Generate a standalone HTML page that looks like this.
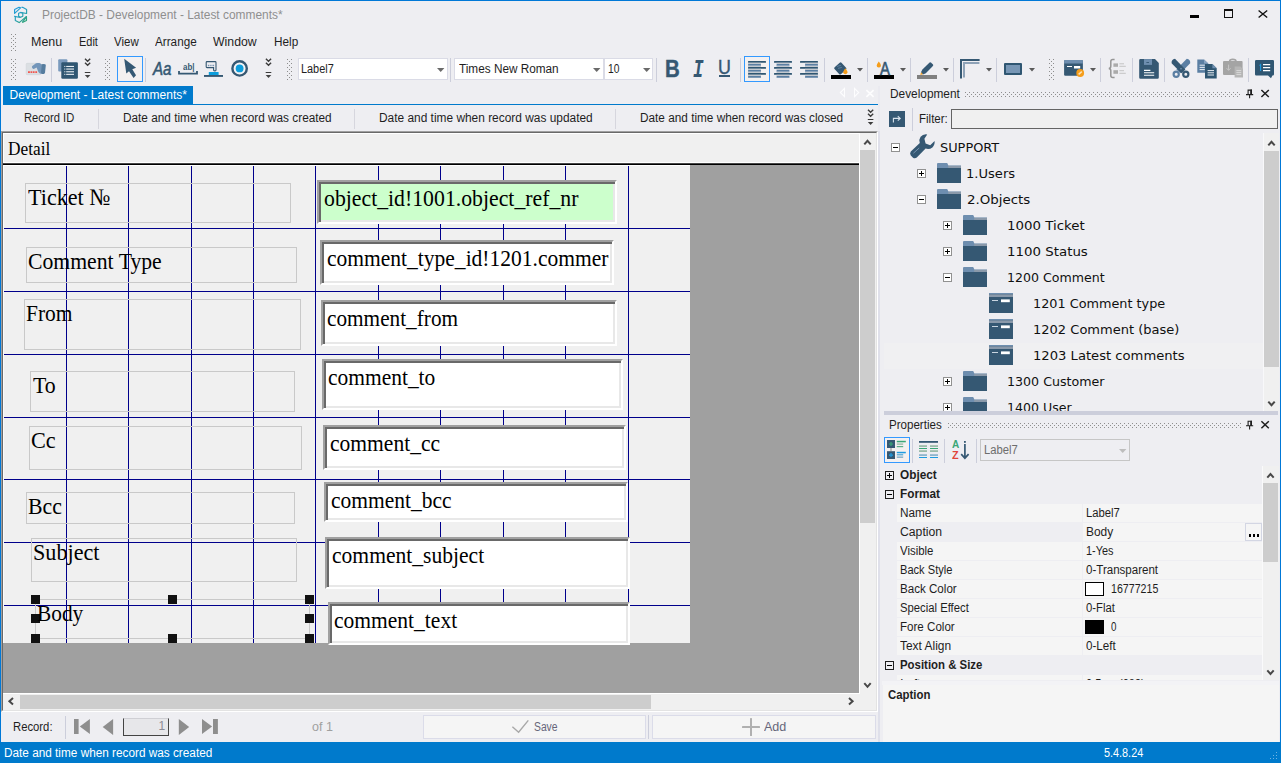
<!DOCTYPE html>
<html lang="en"><head><meta charset="utf-8"><title>ProjectDB - Development - Latest comments*</title>
<style>
html,body{margin:0;padding:0;}
body{width:1281px;height:763px;overflow:hidden;background:#EEEEF2;position:relative;font-family:"Liberation Sans", sans-serif;}
div,svg,span.t{position:absolute;box-sizing:border-box;}
svg{overflow:visible;}
.grp{left:0;top:0;width:0;height:0;}
span.t{white-space:pre;transform-origin:0 0;display:block;}
</style></head><body>
<div class="grp" id="window-frame"><div style="left:0px;top:0px;width:1281px;height:1px;background:#0078D7;"></div><div style="left:0px;top:0px;width:1px;height:763px;background:#0078D7;"></div><div style="left:1280px;top:0px;width:1px;height:763px;background:#0078D7;"></div><svg style="left:0;top:0" width="1281" height="763" viewBox="0 0 1281 763"><defs><linearGradient id="lg" gradientUnits="userSpaceOnUse" x1="14" y1="7" x2="27" y2="23"><stop offset="0" stop-color="#1E9BE8"/><stop offset=".55" stop-color="#27A0B4"/><stop offset="1" stop-color="#2FA365"/></linearGradient></defs>
<g fill="none" stroke="url(#lg)" stroke-width="1.15" stroke-linejoin="round">
<path d="M14.6 13.4V9.6L19 7.3L20.6 7.9L14.6 13.4Z"/>
<path d="M21.5 7.4L22.6 7.3L26.6 9.5V13.5L20.4 12.4"/>
<path d="M18.6 13.3L20.7 12.5L22.8 13.3V16.3L20.7 17.3L18.6 16.4Z"/>
<path d="M14.4 16.3L15.3 16.5V20.6L19.2 22.6L26.5 16.5V20.4L22.3 22.4"/>
<path d="M14.4 16.4L20.4 17.5"/>
<path d="M26.5 16.6L22.4 22.3"/>
</g></svg><span class="t" style='left:42.00px;top:8.00px;font:12px "Liberation Sans", sans-serif;line-height:14.00px;color:#8F8F8F;transform:scaleX(0.9941);'>ProjectDB - Development - Latest comments*</span><div style="left:1190px;top:15px;width:9px;height:3px;background:#000;"></div><div style="left:1224px;top:9px;width:9px;height:9px;border:1px solid #111;border-top:2.6px solid #111;"></div><svg style="left:0;top:0" width="1281" height="763" viewBox="0 0 1281 763"><path d="M1258.6 10.4L1267.2 17.6M1267.2 10.4L1258.6 17.6" stroke="#111" stroke-width="1.35" fill="none"/></svg></div><div class="grp" id="menubar"><div style="left:11px;top:34px;width:5px;height:17px;background:radial-gradient(circle at .5px .5px,#8E8E8E .6px,transparent .8px) 0 0/4px 4px,radial-gradient(circle at .5px .5px,#8E8E8E .6px,transparent .8px) 2px 2px/4px 4px;"></div><span class="t" style='left:31.00px;top:35.00px;font:12px "Liberation Sans", sans-serif;line-height:14.00px;color:#1E1E1E;transform:scaleX(1.0394);'>Menu</span><span class="t" style='left:78.50px;top:35.00px;font:12px "Liberation Sans", sans-serif;line-height:14.00px;color:#1E1E1E;transform:scaleX(0.9136);'>Edit</span><span class="t" style='left:114.00px;top:35.00px;font:12px "Liberation Sans", sans-serif;line-height:14.00px;color:#1E1E1E;transform:scaleX(0.9569);'>View</span><span class="t" style='left:155.00px;top:35.00px;font:12px "Liberation Sans", sans-serif;line-height:14.00px;color:#1E1E1E;transform:scaleX(0.9763);'>Arrange</span><span class="t" style='left:213.00px;top:35.00px;font:12px "Liberation Sans", sans-serif;line-height:14.00px;color:#1E1E1E;transform:scaleX(1.0229);'>Window</span><span class="t" style='left:273.50px;top:35.00px;font:12px "Liberation Sans", sans-serif;line-height:14.00px;color:#1E1E1E;transform:scaleX(0.9798);'>Help</span></div><div class="grp" id="toolbar"><div style="left:11px;top:59px;width:5px;height:21px;background:radial-gradient(circle at .5px .5px,#8E8E8E .6px,transparent .8px) 0 0/4px 4px,radial-gradient(circle at .5px .5px,#8E8E8E .6px,transparent .8px) 2px 2px/4px 4px;"></div><svg style="left:0;top:0" width="1281" height="763" viewBox="0 0 1281 763"><rect x="26.2" y="63.3" width="14.6" height="11.4" rx=".8" fill="#DBDFE3" stroke="#CDD1D5" stroke-width=".5"/>
<path d="M28 71.3h1.9v1.6h-1.9zM30.5 71.3h1.9v1.6h-1.9zM33 71.3h1.6v1.6h-1.6zM35.3 71.3h1.8v1.6h-1.8z" fill="#F2554E"/>
<path d="M32 67.6Q31.6 66.4 32.6 65.8L36 63.3Q36.8 62.9 37.6 62.9L39.2 63Q40 63.1 40.6 63.7L41.6 64.6V73.9L40 73.6Q38.8 73 38.3 71.8L36.6 67.4L33.8 69Q32.6 69.2 32 67.6Z" fill="#7396BA"/>
<path d="M41.4 64.3Q43.6 63.6 45.2 64.3Q45.9 64.8 45.8 65.6L45 72.8Q44.8 73.8 43.8 74L42 74Q41 73.8 41 72.8Z" fill="#567D9F"/></svg><div style="left:51px;top:58px;width:1px;height:24px;background:#CCCEDB;"></div><svg style="left:0;top:0" width="1281" height="763" viewBox="0 0 1281 763"><rect x="58.2" y="59.3" width="9.2" height="12.2" rx="1" fill="#7A9ABD"/>
<rect x="61.3" y="62.2" width="16.6" height="16.6" rx="1.2" fill="#2F5672"/>
<g fill="#E8EEF3"><rect x="66.2" y="65.9" width="7.8" height="1.1"/><rect x="66.2" y="68.5" width="7.8" height="1.1"/><rect x="66.2" y="71.2" width="7.8" height="1.1"/><rect x="66.2" y="73.8" width="7.8" height="1.1"/>
<rect x="64.3" y="65.9" width="1" height="1.1"/><rect x="64.3" y="68.5" width="1" height="1.1"/><rect x="64.3" y="71.2" width="1" height="1.1"/><rect x="64.3" y="73.8" width="1" height="1.1"/></g></svg><svg style="left:0;top:0" width="1281" height="763" viewBox="0 0 1281 763"><g fill="none" stroke="#3A3A3A" stroke-width="1.35"><path d="M85 58.7l2.6 2.6l2.6-2.6M85 62.7l2.6 2.6l2.6-2.6"/><path d="M84.8 72.5h5.6" stroke-width="1"/></g><path d="M84.8 75h5.6l-2.8 2.9z" fill="#444"/></svg><div style="left:105px;top:59px;width:5px;height:21px;background:radial-gradient(circle at .5px .5px,#8E8E8E .6px,transparent .8px) 0 0/4px 4px,radial-gradient(circle at .5px .5px,#8E8E8E .6px,transparent .8px) 2px 2px/4px 4px;"></div><div style="left:117px;top:56px;width:26px;height:26px;border:1px solid #3399FF;background:#F3F0F0;"></div><svg style="left:0;top:0" width="1281" height="763" viewBox="0 0 1281 763"><path d="M124.2 58.8L136.1 67.8L132.3 69.2L136 75.2L133.6 78.1L129 71.3L126.3 73.4Z" fill="#355873"/></svg><div style="left:145px;top:58px;width:1px;height:24px;background:#CCCEDB;"></div><span class="t" style='left:153.06px;top:59.40px;font:italic 17.6px "Liberation Sans", sans-serif;line-height:20.00px;color:#355873;transform:scaleX(0.8577);-webkit-text-stroke:.55px #355873;'>Aa</span><span class="t" style='left:183.00px;top:61.40px;font:bold 9.4px "Liberation Sans", sans-serif;line-height:11.00px;color:#355873;transform:scaleX(0.8500);'>ab|</span><svg style="left:0;top:0" width="1281" height="763" viewBox="0 0 1281 763"><path d="M179 71v2.6h18v-2.6" fill="none" stroke="#355873" stroke-width="1.8"/></svg><svg style="left:0;top:0" width="1281" height="763" viewBox="0 0 1281 763"><rect x="204" y="75" width="19" height="1.9" fill="#355873"/><rect x="208.8" y="72" width="9.8" height="3" fill="#0C9DDC"/>
<path d="M207 61.6h8.2q.8 0 .8.8v7.6q0 .9-.9.9h-.6q-.9 0-.9-.9v-2.4h-6.6q-.8 0-.8-.8v-4.4q0-.8.8-.8z" fill="none" stroke="#355873" stroke-width="1.1"/>
<path d="M208.4 66.2v-1.4M210.2 66.2v-1.4M212 66.2v-1.4M213.6 66.2v-1.4" stroke="#5B7FA3" stroke-width=".9"/></svg><svg style="left:0;top:0" width="1281" height="763" viewBox="0 0 1281 763"><circle cx="239.6" cy="68.4" r="7.2" fill="#F4F4F6" stroke="#355873" stroke-width="2.4"/><circle cx="239.6" cy="68.4" r="3.9" fill="#0C9DDC"/></svg><svg style="left:0;top:0" width="1281" height="763" viewBox="0 0 1281 763"><g fill="none" stroke="#3A3A3A" stroke-width="1.35"><path d="M265.9 58.7l2.6 2.6l2.6-2.6M265.9 62.7l2.6 2.6l2.6-2.6"/><path d="M265.7 72.5h5.6" stroke-width="1"/></g><path d="M265.7 75h5.6l-2.8 2.9z" fill="#444"/></svg><div style="left:287px;top:59px;width:5px;height:21px;background:radial-gradient(circle at .5px .5px,#8E8E8E .6px,transparent .8px) 0 0/4px 4px,radial-gradient(circle at .5px .5px,#8E8E8E .6px,transparent .8px) 2px 2px/4px 4px;"></div><div style="left:298px;top:58px;width:150px;height:22px;background:#fff;border:1px solid #DADBE6;"></div><span class="t" style='left:301.00px;top:62.00px;font:12px "Liberation Sans", sans-serif;line-height:14.00px;color:#1E1E1E;transform:scaleX(0.9076);'>Label7</span><svg style="left:437px;top:67.5px;" width="8" height="5" viewBox="0 0 8 5"><path d="M0 0H7.4L3.7 4Z" fill="#6A6A6A"/></svg><div style="left:450px;top:58px;width:1px;height:24px;background:#CCCEDB;"></div><div style="left:454px;top:58px;width:150px;height:22px;background:#fff;border:1px solid #DADBE6;"></div><span class="t" style='left:458.50px;top:62.00px;font:12px "Liberation Sans", sans-serif;line-height:14.00px;color:#1E1E1E;transform:scaleX(0.9811);'>Times New Roman</span><svg style="left:593px;top:67.5px;" width="8" height="5" viewBox="0 0 8 5"><path d="M0 0H7.4L3.7 4Z" fill="#6A6A6A"/></svg><div style="left:604px;top:58px;width:49px;height:22px;background:#fff;border:1px solid #DADBE6;"></div><span class="t" style='left:608.30px;top:62.00px;font:12px "Liberation Sans", sans-serif;line-height:14.00px;color:#1E1E1E;transform:scaleX(0.8556);'>10</span><svg style="left:642.8px;top:67.5px;" width="8" height="5" viewBox="0 0 8 5"><path d="M0 0H7.4L3.7 4Z" fill="#6A6A6A"/></svg><div style="left:656px;top:58px;width:1px;height:24px;background:#CCCEDB;"></div><span class="t" style='left:665.13px;top:56.00px;font:bold 23.5px "Liberation Sans", sans-serif;line-height:26.00px;color:#355873;transform:scaleX(0.8667);-webkit-text-stroke:.45px #355873;'>B</span><span class="t" style='left:693.10px;top:56.00px;font:italic bold 25.5px "Liberation Mono", monospace;line-height:29.00px;color:#355873;transform:scaleX(0.6875);'>I</span><span class="t" style='left:718.21px;top:56.40px;font:20px "Liberation Sans", sans-serif;line-height:22.00px;color:#355873;transform:scaleX(0.8917);-webkit-text-stroke:.4px #355873;'>U</span><div style="left:719px;top:75.4px;width:11px;height:1.7px;background:#355873;"></div><div style="left:740px;top:58px;width:1px;height:24px;background:#CCCEDB;"></div><div style="left:744px;top:56px;width:26px;height:26px;border:1px solid #3399FF;background:#F3F0F0;"></div><svg style="left:0;top:0" width="1281" height="763" viewBox="0 0 1281 763"><rect x="748" y="61" width="18" height="1.8" rx=".6" fill="#2F5672"/><rect x="748" y="62.8" width="13" height="1.2" fill="#C3C8CF"/><rect x="748" y="64" width="13" height="1.8" rx=".6" fill="#5B7FA3"/><rect x="748" y="65.8" width="13" height="1.2" fill="#C3C8CF"/><rect x="748" y="67" width="18" height="1.8" rx=".6" fill="#2F5672"/><rect x="748" y="68.8" width="13" height="1.2" fill="#C3C8CF"/><rect x="748" y="70" width="13" height="1.8" rx=".6" fill="#5B7FA3"/><rect x="748" y="71.8" width="13" height="1.2" fill="#C3C8CF"/><rect x="748" y="73" width="18" height="1.8" rx=".6" fill="#2F5672"/><rect x="748" y="74.8" width="13" height="1.2" fill="#C3C8CF"/><rect x="748" y="76" width="13" height="1.8" rx=".6" fill="#5B7FA3"/></svg><svg style="left:0;top:0" width="1281" height="763" viewBox="0 0 1281 763"><rect x="774" y="61" width="18" height="1.8" rx=".6" fill="#2F5672"/><rect x="776.5" y="62.8" width="13" height="1.2" fill="#C3C8CF"/><rect x="776.5" y="64" width="13.0" height="1.8" rx=".6" fill="#5B7FA3"/><rect x="776.5" y="65.8" width="13" height="1.2" fill="#C3C8CF"/><rect x="774" y="67" width="18" height="1.8" rx=".6" fill="#2F5672"/><rect x="776.5" y="68.8" width="13" height="1.2" fill="#C3C8CF"/><rect x="776.5" y="70" width="13.0" height="1.8" rx=".6" fill="#5B7FA3"/><rect x="776.5" y="71.8" width="13" height="1.2" fill="#C3C8CF"/><rect x="774" y="73" width="18" height="1.8" rx=".6" fill="#2F5672"/><rect x="776.5" y="74.8" width="13" height="1.2" fill="#C3C8CF"/><rect x="776.5" y="76" width="13.0" height="1.8" rx=".6" fill="#5B7FA3"/></svg><svg style="left:0;top:0" width="1281" height="763" viewBox="0 0 1281 763"><rect x="800" y="61" width="18" height="1.8" rx=".6" fill="#2F5672"/><rect x="805" y="62.8" width="13" height="1.2" fill="#C3C8CF"/><rect x="805" y="64" width="13" height="1.8" rx=".6" fill="#5B7FA3"/><rect x="805" y="65.8" width="13" height="1.2" fill="#C3C8CF"/><rect x="800" y="67" width="18" height="1.8" rx=".6" fill="#2F5672"/><rect x="805" y="68.8" width="13" height="1.2" fill="#C3C8CF"/><rect x="805" y="70" width="13" height="1.8" rx=".6" fill="#5B7FA3"/><rect x="805" y="71.8" width="13" height="1.2" fill="#C3C8CF"/><rect x="800" y="73" width="18" height="1.8" rx=".6" fill="#2F5672"/><rect x="805" y="74.8" width="13" height="1.2" fill="#C3C8CF"/><rect x="805" y="76" width="13" height="1.8" rx=".6" fill="#5B7FA3"/></svg><div style="left:824px;top:58px;width:1px;height:24px;background:#CCCEDB;"></div><svg style="left:0;top:0" width="1281" height="763" viewBox="0 0 1281 763"><rect x="831" y="75" width="20" height="4" fill="#000"/>
<rect x="835.6" y="63.7" width="9.4" height="9.4" rx="1.3" transform="rotate(-42 840.3 68.4)" fill="#355873"/>
<path d="M837 66.4l3.8-1M838 68.4l3.8-1" stroke="#6E8FAF" stroke-width=".7"/>
<path d="M845.3 68.2Q847.7 71 847.5 72.5Q847 74.2 845.2 74.2Q843.2 74 843.2 72.3Q843.4 70.6 845.3 68.2Z" fill="#F59D1A"/></svg><svg style="left:857px;top:68px;" width="6" height="4" viewBox="0 0 6 4"><path d="M0 0H6L3 3.4Z" fill="#5A5A5A"/></svg><div style="left:867px;top:58px;width:1px;height:24px;background:#CCCEDB;"></div><div style="left:874px;top:75px;width:20px;height:4px;background:#000;"></div><span class="t" style='left:879.80px;top:59.00px;font:18.2px "Liberation Sans", sans-serif;line-height:20.00px;color:#355873;transform:scaleX(0.8154);-webkit-text-stroke:.6px #355873;'>A</span><svg style="left:0;top:0" width="1281" height="763" viewBox="0 0 1281 763"><path d="M878.8 61.6Q881.2 64.4 881 66Q880.5 67.6 878.7 67.6Q876.7 67.4 876.7 65.7Q876.9 64 878.8 61.6Z" fill="#F59D1A"/></svg><svg style="left:900px;top:68px;" width="6" height="4" viewBox="0 0 6 4"><path d="M0 0H6L3 3.4Z" fill="#5A5A5A"/></svg><div style="left:910px;top:58px;width:1px;height:24px;background:#CCCEDB;"></div><svg style="left:0;top:0" width="1281" height="763" viewBox="0 0 1281 763"><rect x="917" y="75" width="20" height="4" fill="#808080"/>
<path d="M921 72.2L922.4 69.4L929.6 62.6Q930.4 62 931.2 62.7L933 64.5Q933.6 65.3 932.9 66.1L925.8 73.2L922.9 74.4Z" fill="#355873"/>
<path d="M920.3 75L921 72.3L922.9 74.3Z" fill="#F59D1A"/></svg><svg style="left:943px;top:68px;" width="6" height="4" viewBox="0 0 6 4"><path d="M0 0H6L3 3.4Z" fill="#5A5A5A"/></svg><div style="left:953px;top:58px;width:1px;height:24px;background:#CCCEDB;"></div><svg style="left:0;top:0" width="1281" height="763" viewBox="0 0 1281 763"><path d="M961 78.6V60H979.6" fill="none" stroke="#355873" stroke-width="2"/><path d="M964 77.6V63H979.4" fill="none" stroke="#8EA2B7" stroke-width="2"/></svg><svg style="left:986px;top:68px;" width="6" height="4" viewBox="0 0 6 4"><path d="M0 0H6L3 3.4Z" fill="#5A5A5A"/></svg><div style="left:996px;top:58px;width:1px;height:24px;background:#CCCEDB;"></div><div style="left:1004px;top:63px;width:18.4px;height:12px;background:#7796B5;border:2px solid #2F5672;border-radius:1px;"></div><svg style="left:1029px;top:68px;" width="6" height="4" viewBox="0 0 6 4"><path d="M0 0H6L3 3.4Z" fill="#5A5A5A"/></svg><div style="left:1049px;top:59px;width:5px;height:21px;background:radial-gradient(circle at .5px .5px,#8E8E8E .6px,transparent .8px) 0 0/4px 4px,radial-gradient(circle at .5px .5px,#8E8E8E .6px,transparent .8px) 2px 2px/4px 4px;"></div><svg style="left:0;top:0" width="1281" height="763" viewBox="0 0 1281 763"><rect x="1064.1" y="60.1" width="18.8" height="15.7" rx="1.2" fill="#355873"/><path d="M1064.1 63.6V61.3q0-1.2 1.2-1.2h16.4q1.2 0 1.2 1.2V63.6z" fill="#6E8EAF"/>
<rect x="1067" y="66" width="5" height="1" fill="#fff"/><rect x="1074" y="66" width="6.2" height="2.5" fill="#fff"/>
<circle cx="1080.2" cy="73" r="3.9" fill="#F59D1A"/><path d="M1078.6 74.3l3.2-2.6" stroke="#FBE3BD" stroke-width="1.5"/></svg><svg style="left:1090px;top:68px;" width="6" height="4" viewBox="0 0 6 4"><path d="M0 0H6L3 3.4Z" fill="#5A5A5A"/></svg><div style="left:1100px;top:58px;width:1px;height:24px;background:#CCCEDB;"></div><svg style="left:0;top:0" width="1281" height="763" viewBox="0 0 1281 763"><path d="M1114.6 59.6h-1.8q-2 0-2 2v4.6q0 2-2 2.2q2 .2 2 2.2v4.8q0 2 2 2h1.8" fill="none" stroke="#969696" stroke-width="1.5"/>
<rect x="1113.4" y="63.4" width="4.6" height="3.4" fill="#ABABAB"/><rect x="1113.4" y="70.2" width="4.6" height="3.6" fill="#ABABAB"/>
<path d="M1119.4 63.8h4.6M1119.4 66.3h6.4M1119.4 70.7h4.6M1119.4 73.3h6.4" stroke="#C4C4C4" stroke-width="1"/></svg><div style="left:1132px;top:58px;width:1px;height:24px;background:#CCCEDB;"></div><svg style="left:0;top:0" width="1281" height="763" viewBox="0 0 1281 763"><path d="M1140.4 59.1H1155L1158.8 62.9V77.6q0 1.2-1.2 1.2h-17.2q-1.2 0-1.2-1.2V60.3q0-1.2 1.2-1.2z" fill="#355873"/>
<rect x="1144" y="59.1" width="8" height="5.8" fill="#6E8EAF"/><rect x="1146.4" y="62" width="2.6" height=".9" fill="#355873"/>
<path d="M1144 70.4h6.4M1144 72.8h10.2M1144 75.2h10.2" stroke="#fff" stroke-width="1.1"/></svg><div style="left:1164px;top:58px;width:1px;height:24px;background:#CCCEDB;"></div><svg style="left:0;top:0" width="1281" height="763" viewBox="0 0 1281 763"><path d="M1186.8 58.8Q1190.6 59.4 1190.2 63.2L1180.4 73.2L1176.4 69.6Z" fill="#5B7FA3"/>
<path d="M1175 58.8Q1171.2 59.4 1171.6 63.2L1181.4 73.2L1185.4 69.6Z" fill="#355873"/>
<circle cx="1176.2" cy="74.2" r="2.6" fill="none" stroke="#5B7FA3" stroke-width="2.2"/>
<circle cx="1185.8" cy="74.2" r="2.6" fill="none" stroke="#355873" stroke-width="2.2"/>
<circle cx="1181" cy="68.8" r=".8" fill="#7D9BBB"/></svg><svg style="left:0;top:0" width="1281" height="763" viewBox="0 0 1281 763"><path d="M1197.3 59.4H1204L1208.3 63.6V72.7H1197.3Z" fill="#5B7FA3"/><path d="M1204 59.4V63.6H1208.3Z" fill="#88A4C2"/>
<path d="M1199.6 65.2h5.2M1199.6 67.4h5.2M1199.6 69.6h5.2" stroke="#E8EEF3" stroke-width="1"/>
<path d="M1205 64H1212.4L1216.7 68.2V78.5H1205Z" fill="#2F5672"/><path d="M1212.4 64V68.2H1216.7Z" fill="#6E8EAF"/>
<path d="M1207.6 70.6h6.4M1207.6 72.8h6.4M1207.6 75h6.4" stroke="#E8EEF3" stroke-width="1"/></svg><svg style="left:0;top:0" width="1281" height="763" viewBox="0 0 1281 763"><rect x="1223" y="61" width="19.6" height="14" rx="1" fill="#A4A4A4"/><path d="M1229.6 61.4Q1229.6 59.4 1232.8 59.4Q1236 59.4 1236 61.4" fill="none" stroke="#A4A4A4" stroke-width="1.6"/>
<path d="M1228.6 64.6v5.4M1226.6 68.2l2 2.2l2-2.2" stroke="#C6C6C6" stroke-width="1" fill="none"/>
<path d="M1234.6 66.4H1240.4L1243 69V77.4H1234.6Z" fill="#B6B6B6"/><path d="M1236.4 70.6h4.8M1236.4 72.6h4.8M1236.4 74.6h4.8" stroke="#DCDCDC" stroke-width=".9"/></svg><div style="left:1248px;top:58px;width:1px;height:24px;background:#CCCEDB;"></div><svg style="left:0;top:0" width="1281" height="763" viewBox="0 0 1281 763"><path d="M1256.2 60H1272.8q1.2 0 1.2 1.2V74.2q0 1.2-1.2 1.2H1272.4L1271 78.2L1268 75.4H1256.2q-1.2 0-1.2-1.2V61.2q0-1.2 1.2-1.2z" fill="#2F5672"/>
<path d="M1263 64.6h7.2M1263 67.6h7.2M1263 70.6h7.2" stroke="#fff" stroke-width="1.2"/>
<path d="M1259.6 65.6l1-1v6.4" stroke="#1E9BE0" stroke-width="1.1" fill="none"/></svg></div><div class="grp" id="document"><div style="left:3px;top:86px;width:190px;height:19px;background:#007ACC;"></div><div style="left:3px;top:104px;width:875px;height:1px;background:#007ACC;"></div><span class="t" style='left:9.50px;top:88.00px;font:12px "Liberation Sans", sans-serif;line-height:14.00px;color:#fff;'>Development - Latest comments*</span><svg style="left:0;top:0" width="1281" height="763" viewBox="0 0 1281 763"><g fill="none" stroke="#FDFDFE" stroke-width="1.1"><path d="M844.5 88.3L840.3 92.5L844.5 96.7Z"/><path d="M854.5 88.3L858.7 92.5L854.5 96.7Z"/></g>
<path d="M866.4 90.2L873.6 96.8M873.6 90.2L866.4 96.8" stroke="#FDFDFE" stroke-width="1.7" fill="none"/></svg><span class="t" style='left:24.00px;top:111.00px;font:12px "Liberation Sans", sans-serif;line-height:14.00px;color:#1E1E1E;transform:scaleX(0.9291);'>Record ID</span><div style="left:98px;top:109px;width:1px;height:20px;background:#D6D6DE;"></div><span class="t" style='left:123.00px;top:111.00px;font:12px "Liberation Sans", sans-serif;line-height:14.00px;color:#1E1E1E;transform:scaleX(0.9838);'>Date and time when record was created</span><div style="left:354px;top:109px;width:1px;height:20px;background:#D6D6DE;"></div><span class="t" style='left:379.00px;top:111.00px;font:12px "Liberation Sans", sans-serif;line-height:14.00px;color:#1E1E1E;transform:scaleX(0.9917);'>Date and time when record was updated</span><div style="left:615px;top:109px;width:1px;height:20px;background:#D6D6DE;"></div><span class="t" style='left:640.00px;top:111.00px;font:12px "Liberation Sans", sans-serif;line-height:14.00px;color:#1E1E1E;transform:scaleX(0.9825);'>Date and time when record was closed</span><svg style="left:0;top:0" width="1281" height="763" viewBox="0 0 1281 763"><g fill="none" stroke="#3A3A3A" stroke-width="1.35"><path d="M868 109.7l2.6 2.6l2.6-2.6M868 113.7l2.6 2.6l2.6-2.6"/><path d="M867.8 119.5h5.6" stroke-width="1"/></g><path d="M867.8 122h5.6l-2.8 2.9z" fill="#3A3A3A"/></svg><div style="left:1px;top:131px;width:877px;height:581px;background:#F0F0F0;border-top:1px solid #A0A0A0;border-left:1px solid #A0A0A0;border-right:1px solid #fff;border-bottom:1px solid #fff;"></div><div style="left:2px;top:132px;width:875px;height:579px;border-top:1px solid #696969;border-left:1px solid #696969;border-right:1px solid #E3E3E3;border-bottom:1px solid #E3E3E3;"></div><div style="left:3px;top:133px;width:857px;height:561px;background:#fff;"></div><div style="left:3px;top:165px;width:856px;height:528px;background:#A0A0A0;"></div><div style="left:4px;top:134px;width:855px;height:29px;background:#F0F0F0;"></div><div style="left:4px;top:162px;width:855px;height:1px;background:#fff;"></div><div style="left:3px;top:163px;width:856px;height:1px;background:#474747;"></div><div style="left:3px;top:164px;width:856px;height:1px;background:#000;"></div><span class="t" style='left:8.20px;top:138.00px;font:18.7px "Liberation Serif", serif;line-height:21.00px;color:#000;transform:scaleX(0.9259);'>Detail</span><div style="left:3px;top:165px;width:1px;height:478px;background:#FCFCFC;"></div><div class="form" style="left:4px;top:165px;width:686px;height:478px;background:#F0F0F0;"><div style="left:62px;top:0px;width:1px;height:478px;background:#00008B;"></div><div style="left:124px;top:0px;width:1px;height:478px;background:#00008B;"></div><div style="left:187px;top:0px;width:1px;height:478px;background:#00008B;"></div><div style="left:249px;top:0px;width:1px;height:478px;background:#00008B;"></div><div style="left:311px;top:0px;width:1px;height:478px;background:#00008B;"></div><div style="left:374px;top:0px;width:1px;height:478px;background:#00008B;"></div><div style="left:436px;top:0px;width:1px;height:478px;background:#00008B;"></div><div style="left:499px;top:0px;width:1px;height:478px;background:#00008B;"></div><div style="left:561px;top:0px;width:1px;height:478px;background:#00008B;"></div><div style="left:624px;top:0px;width:1px;height:478px;background:#00008B;"></div><div style="left:0px;top:63px;width:686px;height:1px;background:#00008B;"></div><div style="left:0px;top:126px;width:686px;height:1px;background:#00008B;"></div><div style="left:0px;top:189px;width:686px;height:1px;background:#00008B;"></div><div style="left:0px;top:252px;width:686px;height:1px;background:#00008B;"></div><div style="left:0px;top:314px;width:686px;height:1px;background:#00008B;"></div><div style="left:0px;top:377px;width:686px;height:1px;background:#00008B;"></div><div style="left:0px;top:440px;width:686px;height:1px;background:#00008B;"></div><div style="left:0px;top:0px;width:686px;height:1px;background:#fff;"></div><div style="left:21px;top:18px;width:266px;height:40px;border:1px solid #C9C9C9;"></div><div style="left:22px;top:82px;width:271px;height:36px;border:1px solid #C9C9C9;"></div><div style="left:20px;top:134px;width:277px;height:51px;border:1px solid #C9C9C9;"></div><div style="left:26px;top:206px;width:265px;height:41px;border:1px solid #C9C9C9;"></div><div style="left:25px;top:261px;width:273px;height:44px;border:1px solid #C9C9C9;"></div><div style="left:22px;top:327px;width:269px;height:32px;border:1px solid #C9C9C9;"></div><div style="left:27px;top:373px;width:265.5px;height:44px;border:1px solid #C9C9C9;"></div><div style="left:31px;top:434px;width:275px;height:40px;border:1px solid #C9C9C9;"></div><div style="left:313px;top:15px;width:300px;height:44px;background:#CCFFCC;border:2px solid;border-color:#A0A0A0 #fff #fff #A0A0A0;box-shadow:inset 2px 2px 0 #696969,inset -2px -2px 0 #E8E8E8;"></div><div style="left:316px;top:75px;width:294px;height:45px;background:#fff;border:2px solid;border-color:#A0A0A0 #fff #fff #A0A0A0;box-shadow:inset 2px 2px 0 #696969,inset -2px -2px 0 #E8E8E8;"></div><div style="left:317px;top:135px;width:296px;height:46px;background:#fff;border:2px solid;border-color:#A0A0A0 #fff #fff #A0A0A0;box-shadow:inset 2px 2px 0 #696969,inset -2px -2px 0 #E8E8E8;"></div><div style="left:318px;top:194px;width:301px;height:51px;background:#fff;border:2px solid;border-color:#A0A0A0 #fff #fff #A0A0A0;box-shadow:inset 2px 2px 0 #696969,inset -2px -2px 0 #E8E8E8;"></div><div style="left:319px;top:260px;width:303px;height:45px;background:#fff;border:2px solid;border-color:#A0A0A0 #fff #fff #A0A0A0;box-shadow:inset 2px 2px 0 #696969,inset -2px -2px 0 #E8E8E8;"></div><div style="left:320px;top:317px;width:304px;height:40px;background:#fff;border:2px solid;border-color:#A0A0A0 #fff #fff #A0A0A0;box-shadow:inset 2px 2px 0 #696969,inset -2px -2px 0 #E8E8E8;"></div><div style="left:321px;top:372px;width:305px;height:52px;background:#fff;border:2px solid;border-color:#A0A0A0 #fff #fff #A0A0A0;box-shadow:inset 2px 2px 0 #696969,inset -2px -2px 0 #E8E8E8;"></div><div style="left:324px;top:437px;width:302px;height:43px;background:#fff;border:2px solid;border-color:#A0A0A0 #fff #fff #A0A0A0;box-shadow:inset 2px 2px 0 #696969,inset -2px -2px 0 #E8E8E8;"></div><div style="left:27px;top:430px;width:9px;height:9px;background:#111;"></div><div style="left:27px;top:469px;width:9px;height:9px;background:#111;"></div><div style="left:164px;top:430px;width:9px;height:9px;background:#111;"></div><div style="left:164px;top:469px;width:9px;height:9px;background:#111;"></div><div style="left:301px;top:430px;width:9px;height:9px;background:#111;"></div><div style="left:301px;top:469px;width:9px;height:9px;background:#111;"></div><div style="left:27px;top:449px;width:9px;height:9px;background:#111;"></div><div style="left:301px;top:449px;width:9px;height:9px;background:#111;"></div></div><span class="t" style='left:28.00px;top:184.00px;font:23.5px "Liberation Serif", serif;line-height:26.00px;color:#000;transform:scaleX(0.9417);'>Ticket №</span><span class="t" style='left:28.25px;top:248.00px;font:23.5px "Liberation Serif", serif;line-height:26.00px;color:#000;transform:scaleX(0.9238);'>Comment Type</span><span class="t" style='left:25.75px;top:300.00px;font:23.5px "Liberation Serif", serif;line-height:26.00px;color:#000;transform:scaleX(0.9132);'>From</span><span class="t" style='left:32.50px;top:372.00px;font:23.5px "Liberation Serif", serif;line-height:26.00px;color:#000;transform:scaleX(0.9277);'>To</span><span class="t" style='left:31.25px;top:427.00px;font:23.5px "Liberation Serif", serif;line-height:26.00px;color:#000;transform:scaleX(0.9445);'>Cc</span><span class="t" style='left:28.00px;top:493.00px;font:23.5px "Liberation Serif", serif;line-height:26.00px;color:#000;transform:scaleX(0.9279);'>Bcc</span><span class="t" style='left:32.56px;top:539.00px;font:23.5px "Liberation Serif", serif;line-height:26.00px;color:#000;transform:scaleX(0.9434);'>Subject</span><span class="t" style='left:37.00px;top:600.00px;font:23.5px "Liberation Serif", serif;line-height:26.00px;color:#000;transform:scaleX(0.9087);'>Body</span><span class="t" style='left:323.50px;top:185.00px;font:23.8px "Liberation Serif", serif;line-height:26.00px;color:#000;transform:scaleX(0.9146);'>object_id!1001.object_ref_nr</span><span class="t" style='left:326.50px;top:245.00px;font:23.8px "Liberation Serif", serif;line-height:26.00px;color:#000;transform:scaleX(0.9042);'>comment_type_id!1201.commer</span><span class="t" style='left:327.00px;top:305.00px;font:23.8px "Liberation Serif", serif;line-height:26.00px;color:#000;transform:scaleX(0.8934);'>comment_from</span><span class="t" style='left:328.00px;top:364.00px;font:23.8px "Liberation Serif", serif;line-height:26.00px;color:#000;transform:scaleX(0.9021);'>comment_to</span><span class="t" style='left:329.50px;top:430.00px;font:23.8px "Liberation Serif", serif;line-height:26.00px;color:#000;transform:scaleX(0.9049);'>comment_cc</span><span class="t" style='left:330.50px;top:487.00px;font:23.8px "Liberation Serif", serif;line-height:26.00px;color:#000;transform:scaleX(0.9029);'>comment_bcc</span><span class="t" style='left:331.50px;top:542.00px;font:23.8px "Liberation Serif", serif;line-height:26.00px;color:#000;transform:scaleX(0.9064);'>comment_subject</span><span class="t" style='left:334.00px;top:607.00px;font:23.8px "Liberation Serif", serif;line-height:26.00px;color:#000;transform:scaleX(0.9046);'>comment_text</span><div style="left:860px;top:133px;width:16px;height:561px;background:#F0F0F0;"></div><div style="left:860px;top:150px;width:15px;height:373px;background:#CDCDCD;"></div><svg style="left:0;top:0" width="1281" height="763" viewBox="0 0 1281 763"><path d="M864.3 144.4L867.5 140.8L870.7 144.4" fill="none" stroke="#484848" stroke-width="2"/><path d="M864.3 683.2L867.5 686.8L870.7 683.2" fill="none" stroke="#484848" stroke-width="2"/></svg><div style="left:3px;top:694px;width:873px;height:16px;background:#F0F0F0;"></div><div style="left:20px;top:695px;width:631px;height:14px;background:#CDCDCD;"></div><svg style="left:0;top:0" width="1281" height="763" viewBox="0 0 1281 763"><path d="M13 698L9.4 701.2L13 704.4" fill="none" stroke="#484848" stroke-width="2"/><path d="M849 698L852.6 701.2L849 704.4" fill="none" stroke="#484848" stroke-width="2"/></svg><div style="left:878px;top:131px;width:2px;height:611px;background:#DFE0EA;"></div><div style="left:878px;top:86px;width:2px;height:45px;background:#EAEAF0;"></div><div class="grp" id="recordbar"><span class="t" style='left:13.30px;top:719.60px;font:12px "Liberation Sans", sans-serif;line-height:14.00px;color:#1E1E1E;transform:scaleX(0.9404);'>Record:</span><div style="left:65px;top:716px;width:1px;height:23px;background:#CCCEDB;"></div><svg style="left:0;top:0" width="1281" height="763" viewBox="0 0 1281 763"><g fill="#8E8E8E"><rect x="74" y="719" width="4.6" height="15"/><path d="M89.9 719V734L79.8 726.5Z"/>
<path d="M113.1 719V735L102.7 727Z"/>
<path d="M178.8 719V735L189.2 727Z"/>
<path d="M202 719V734L212.1 726.5Z"/><rect x="213" y="719" width="4.9" height="15"/></g></svg><div style="left:123px;top:718px;width:46px;height:18px;background:#E7E7EA;border:1px solid #444;border-top-color:#CFCFD4;"></div><span class="t" style='left:158.40px;top:719.00px;font:12px "Liberation Sans", sans-serif;line-height:14.00px;color:#8C8C96;'>1</span><span class="t" style='left:311.60px;top:719.60px;font:12px "Liberation Sans", sans-serif;line-height:14.00px;color:#A0A0A0;transform:scaleX(1.0422);'>of 1</span><div style="left:423px;top:715px;width:223px;height:24px;background:#F5F5F5;border:1px solid #DBDCE9;"></div><div style="left:648px;top:715px;width:1px;height:24px;background:#CCCEDB;"></div><div style="left:652px;top:715px;width:224px;height:24px;background:#F5F5F5;border:1px solid #DBDCE9;"></div><svg style="left:0;top:0" width="1281" height="763" viewBox="0 0 1281 763"><path d="M512.4 726.8L518.6 732.2L528.3 720.4" fill="none" stroke="#A8A8A8" stroke-width="1.4"/><rect x="742" y="726" width="18" height="2" rx=".6" fill="#B0B0B0"/><rect x="750" y="718" width="2" height="18" rx=".6" fill="#B0B0B0"/></svg><span class="t" style='left:534.20px;top:719.80px;font:12px "Liberation Sans", sans-serif;line-height:14.00px;color:#66667A;transform:scaleX(0.8599);'>Save</span><span class="t" style='left:764.00px;top:719.80px;font:12px "Liberation Sans", sans-serif;line-height:14.00px;color:#66667A;transform:scaleX(1.0446);'>Add</span></div></div><div class="grp" id="statusbar"><div style="left:0px;top:742px;width:1281px;height:21px;background:#007ACC;"></div><span class="t" style='left:4.20px;top:745.70px;font:12px "Liberation Sans", sans-serif;line-height:14.00px;color:#fff;transform:scaleX(0.9819);'>Date and time when record was created</span><span class="t" style='left:1103.50px;top:745.70px;font:12px "Liberation Sans", sans-serif;line-height:14.00px;color:#fff;transform:scaleX(0.9039);'>5.4.8.24</span><svg style="left:0;top:0" width="1281" height="763" viewBox="0 0 1281 763"><g fill="#6FB3E3"><rect x="1276" y="752" width="1" height="1"/><rect x="1276" y="755" width="1" height="1"/><rect x="1273" y="755" width="1" height="1"/><rect x="1276" y="758" width="1" height="1"/><rect x="1273" y="758" width="1" height="1"/><rect x="1270" y="758" width="1" height="1"/></g></svg></div><div class="grp" id="panel-development"><span class="t" style='left:889.50px;top:86.50px;font:12px "Liberation Sans", sans-serif;line-height:14.00px;color:#1E1E1E;transform:scaleX(0.9878);'>Development</span><div style="left:965px;top:92px;width:276px;height:5px;background:radial-gradient(circle at .5px .5px,#8E8E8E .6px,transparent .8px) 0 0/4px 4px,radial-gradient(circle at .5px .5px,#8E8E8E .6px,transparent .8px) 2px 2px/4px 4px;"></div><svg style="left:0;top:0" width="1281" height="763" viewBox="0 0 1281 763"><path d="M1247.6 90.1h4.4M1248.1 89.6v5M1251 89.6v5M1246 94.6h7.2M1249.6 94.6v3.6" fill="none" stroke="#1E1E1E" stroke-width="1.1"/><rect x="1250.4" y="89.6" width="1.6" height="5" fill="#1E1E1E"/>
<path d="M1261.4 90.0L1268.8 97.0M1268.8 90.0L1261.4 97.0" stroke="#1E1E1E" stroke-width="1.5" fill="none"/></svg><div style="left:889px;top:111px;width:16px;height:16px;background:#355873;"></div><svg style="left:0;top:0" width="1281" height="763" viewBox="0 0 1281 763"><path d="M893.4 122.6V118.4H899.8M897.8 116.2L900.2 118.4L897.8 120.6" fill="none" stroke="#D7E2EC" stroke-width="1.1"/></svg><div style="left:912px;top:108px;width:1px;height:23px;background:#CCCEDB;"></div><span class="t" style='left:919.00px;top:111.50px;font:12px "Liberation Sans", sans-serif;line-height:14.00px;color:#1E1E1E;transform:scaleX(0.9607);'>Filter:</span><div style="left:951px;top:109px;width:327px;height:20px;background:#F0F0F0;border:1px solid #646464;"></div><div class="tree" style="left:884px;top:133px;width:396px;height:278px;background:#EEEEF2;overflow:hidden;"><div style="left:0px;top:210px;width:379px;height:26px;background:#F0F0F2;"></div><div style="left:7px;top:10.0px;width:9px;height:9px;background:#fff;border:1px solid #919191;"><div style="left:1px;top:3px;width:5px;height:1px;background:#000"></div></div><svg style="left:26px;top:1px" width="25" height="25" viewBox="0 0 25 25"><path d="M17.2 .4Q13 -.2 10.6 2.8Q8.6 5.6 9.8 9L.8 17.6Q-.6 19.4 .8 21.6L3 23.8Q5 25 6.8 23.6L15.6 14.6Q19.4 15.8 22.4 13.4Q25 11 24.6 7L20.2 11.2L15.6 9.6L14.4 4.8Z" fill="#355873"/><path d="M3.4 19.2L9.2 14" stroke="#7F9AB5" stroke-width=".9" fill="none"/></svg><div style="left:33px;top:36.0px;width:9px;height:9px;background:#fff;border:1px solid #919191;"><div style="left:1px;top:3px;width:5px;height:1px;background:#000"></div><div style="left:3px;top:1px;width:1px;height:5px;background:#000"></div></div><svg style="left:53px;top:30.0px" width="24" height="20" viewBox="0 0 24 20"><path d="M1 0H10.2L11.4 2.6H24V6H0V1Q0 0 1 0Z" fill="#6E8EAF"/><rect x="11.2" y="2.8" width="12.8" height="2.4" fill="#8A99AA"/><rect x="0" y="5" width="24" height="15" fill="#355873"/></svg><div style="left:33px;top:62.0px;width:9px;height:9px;background:#fff;border:1px solid #919191;"><div style="left:1px;top:3px;width:5px;height:1px;background:#000"></div></div><svg style="left:53px;top:56.0px" width="24" height="20" viewBox="0 0 24 20"><path d="M1 0H10.2L11.4 2.6H24V6H0V1Q0 0 1 0Z" fill="#6E8EAF"/><rect x="11.2" y="2.8" width="12.8" height="2.4" fill="#8A99AA"/><rect x="0" y="5" width="24" height="15" fill="#355873"/></svg><div style="left:59px;top:88.0px;width:9px;height:9px;background:#fff;border:1px solid #919191;"><div style="left:1px;top:3px;width:5px;height:1px;background:#000"></div><div style="left:3px;top:1px;width:1px;height:5px;background:#000"></div></div><svg style="left:79px;top:82.0px" width="24" height="20" viewBox="0 0 24 20"><path d="M1 0H10.2L11.4 2.6H24V6H0V1Q0 0 1 0Z" fill="#6E8EAF"/><rect x="11.2" y="2.8" width="12.8" height="2.4" fill="#8A99AA"/><rect x="0" y="5" width="24" height="15" fill="#355873"/></svg><div style="left:59px;top:114.0px;width:9px;height:9px;background:#fff;border:1px solid #919191;"><div style="left:1px;top:3px;width:5px;height:1px;background:#000"></div><div style="left:3px;top:1px;width:1px;height:5px;background:#000"></div></div><svg style="left:79px;top:108.0px" width="24" height="20" viewBox="0 0 24 20"><path d="M1 0H10.2L11.4 2.6H24V6H0V1Q0 0 1 0Z" fill="#6E8EAF"/><rect x="11.2" y="2.8" width="12.8" height="2.4" fill="#8A99AA"/><rect x="0" y="5" width="24" height="15" fill="#355873"/></svg><div style="left:59px;top:140.0px;width:9px;height:9px;background:#fff;border:1px solid #919191;"><div style="left:1px;top:3px;width:5px;height:1px;background:#000"></div></div><svg style="left:79px;top:134.0px" width="24" height="20" viewBox="0 0 24 20"><path d="M1 0H10.2L11.4 2.6H24V6H0V1Q0 0 1 0Z" fill="#6E8EAF"/><rect x="11.2" y="2.8" width="12.8" height="2.4" fill="#8A99AA"/><rect x="0" y="5" width="24" height="15" fill="#355873"/></svg><svg style="left:105px;top:160.0px" width="24" height="20" viewBox="0 0 24 20"><rect width="24" height="20" fill="#355873"/><rect width="24" height="1.4" fill="#6E8EAF"/><rect y="1.4" width="24" height="2.6" fill="#8A99AA"/><rect x="3" y="7" width="6" height="1" fill="#C9D5E0"/><rect x="12" y="6.4" width="8.8" height="2.8" fill="#fff"/></svg><svg style="left:105px;top:186.0px" width="24" height="20" viewBox="0 0 24 20"><rect width="24" height="20" fill="#355873"/><rect width="24" height="1.4" fill="#6E8EAF"/><rect y="1.4" width="24" height="2.6" fill="#8A99AA"/><rect x="3" y="7" width="6" height="1" fill="#C9D5E0"/><rect x="12" y="6.4" width="8.8" height="2.8" fill="#fff"/></svg><svg style="left:105px;top:212.0px" width="24" height="20" viewBox="0 0 24 20"><rect width="24" height="20" fill="#355873"/><rect width="24" height="1.4" fill="#6E8EAF"/><rect y="1.4" width="24" height="2.6" fill="#8A99AA"/><rect x="3" y="7" width="6" height="1" fill="#C9D5E0"/><rect x="12" y="6.4" width="8.8" height="2.8" fill="#fff"/></svg><div style="left:59px;top:244.0px;width:9px;height:9px;background:#fff;border:1px solid #919191;"><div style="left:1px;top:3px;width:5px;height:1px;background:#000"></div><div style="left:3px;top:1px;width:1px;height:5px;background:#000"></div></div><svg style="left:79px;top:238.0px" width="24" height="20" viewBox="0 0 24 20"><path d="M1 0H10.2L11.4 2.6H24V6H0V1Q0 0 1 0Z" fill="#6E8EAF"/><rect x="11.2" y="2.8" width="12.8" height="2.4" fill="#8A99AA"/><rect x="0" y="5" width="24" height="15" fill="#355873"/></svg><div style="left:59px;top:270.0px;width:9px;height:9px;background:#fff;border:1px solid #919191;"><div style="left:1px;top:3px;width:5px;height:1px;background:#000"></div><div style="left:3px;top:1px;width:1px;height:5px;background:#000"></div></div><svg style="left:79px;top:264.0px" width="24" height="20" viewBox="0 0 24 20"><path d="M1 0H10.2L11.4 2.6H24V6H0V1Q0 0 1 0Z" fill="#6E8EAF"/><rect x="11.2" y="2.8" width="12.8" height="2.4" fill="#8A99AA"/><rect x="0" y="5" width="24" height="15" fill="#355873"/></svg><span class="t" style='left:56.40px;top:7.00px;font:12.5px "DejaVu Sans", "Liberation Sans", sans-serif;line-height:15.00px;color:#101010;transform:scaleX(1.0316);'>SUPPORT</span><span class="t" style='left:81.95px;top:33.00px;font:12.5px "DejaVu Sans", "Liberation Sans", sans-serif;line-height:15.00px;color:#101010;transform:scaleX(1.0459);'>1.Users</span><span class="t" style='left:83.00px;top:59.00px;font:12.5px "DejaVu Sans", "Liberation Sans", sans-serif;line-height:15.00px;color:#101010;transform:scaleX(1.0710);'>2.Objects</span><span class="t" style='left:123.23px;top:85.00px;font:12.5px "DejaVu Sans", "Liberation Sans", sans-serif;line-height:15.00px;color:#101010;transform:scaleX(1.0673);'>1000 Ticket</span><span class="t" style='left:123.23px;top:111.00px;font:12.5px "DejaVu Sans", "Liberation Sans", sans-serif;line-height:15.00px;color:#101010;transform:scaleX(1.0688);'>1100 Status</span><span class="t" style='left:123.29px;top:137.00px;font:12.5px "DejaVu Sans", "Liberation Sans", sans-serif;line-height:15.00px;color:#101010;transform:scaleX(1.0060);'>1200 Comment</span><span class="t" style='left:148.97px;top:163.00px;font:12.5px "DejaVu Sans", "Liberation Sans", sans-serif;line-height:15.00px;color:#101010;transform:scaleX(1.0255);'>1201 Comment type</span><span class="t" style='left:148.96px;top:189.00px;font:12.5px "DejaVu Sans", "Liberation Sans", sans-serif;line-height:15.00px;color:#101010;transform:scaleX(1.0420);'>1202 Comment (base)</span><span class="t" style='left:148.95px;top:215.00px;font:12.5px "DejaVu Sans", "Liberation Sans", sans-serif;line-height:15.00px;color:#101010;transform:scaleX(1.0506);'>1203 Latest comments</span><span class="t" style='left:123.29px;top:241.00px;font:12.5px "DejaVu Sans", "Liberation Sans", sans-serif;line-height:15.00px;color:#101010;transform:scaleX(1.0108);'>1300 Customer</span><span class="t" style='left:123.29px;top:267.00px;font:12.5px "DejaVu Sans", "Liberation Sans", sans-serif;line-height:15.00px;color:#101010;transform:scaleX(1.0057);'>1400 User</span></div><div style="left:1263px;top:133px;width:1px;height:278px;background:#F8F8FA;"></div><div style="left:1264px;top:133px;width:15px;height:278px;background:#F0F0F0;"></div><div style="left:1264px;top:151px;width:15px;height:216px;background:#CDCDCD;"></div><svg style="left:0;top:0" width="1281" height="763" viewBox="0 0 1281 763"><path d="M1268.3 145.4L1271.5 141.8L1274.7 145.4" fill="none" stroke="#484848" stroke-width="2"/><path d="M1268.3 401.6L1271.5 405.2L1274.7 401.6" fill="none" stroke="#484848" stroke-width="2"/></svg><div style="left:884px;top:411px;width:394px;height:4px;background:#CCCEDB;"></div></div><div class="grp" id="panel-properties"><span class="t" style='left:889.00px;top:417.50px;font:12px "Liberation Sans", sans-serif;line-height:14.00px;color:#1E1E1E;transform:scaleX(0.9636);'>Properties</span><div style="left:948px;top:423px;width:294px;height:5px;background:radial-gradient(circle at .5px .5px,#8E8E8E .6px,transparent .8px) 0 0/4px 4px,radial-gradient(circle at .5px .5px,#8E8E8E .6px,transparent .8px) 2px 2px/4px 4px;"></div><svg style="left:0;top:0" width="1281" height="763" viewBox="0 0 1281 763"><path d="M1247.6 421.3h4.4M1248.1 420.8v5M1251 420.8v5M1246 425.8h7.2M1249.6 425.8v3.6" fill="none" stroke="#1E1E1E" stroke-width="1.1"/><rect x="1250.4" y="420.8" width="1.6" height="5" fill="#1E1E1E"/>
<path d="M1261.4 421.2L1268.8 428.2M1268.8 421.2L1261.4 428.2" stroke="#1E1E1E" stroke-width="1.5" fill="none"/></svg><div style="left:884px;top:437px;width:26px;height:26px;border:1px solid #3399FF;background:#F3F0F0;"></div><svg style="left:0;top:0" width="1281" height="763" viewBox="0 0 1281 763"><rect x="887" y="440" width="8" height="8" fill="#355873"/><rect x="887" y="451.2" width="8" height="7.8" fill="#355873"/><rect x="890.5" y="448" width="1" height="3.2" fill="#8E8E8E"/>
<path d="M889 444h4M891 442v4" stroke="#3AA776" stroke-width="1.2"/><path d="M889 455.1h4M891 453.1v4" stroke="#1E9BE0" stroke-width="1.2"/>
<rect x="896.8" y="440.8" width="9" height="1.5" fill="#3AA776"/><rect x="896.8" y="443.4" width="6.4" height="1.4" fill="#9DBBAA"/><rect x="896.8" y="446" width="6.4" height="1.2" fill="#5BAF88"/>
<rect x="896.8" y="451.8" width="9" height="1.5" fill="#1E9BE0"/><rect x="896.8" y="454.2" width="6.4" height="1.2" fill="#4AA6D8"/><rect x="896.8" y="456.4" width="6.4" height="1.6" fill="#8FB5CC"/></svg><div style="left:912px;top:439px;width:1px;height:24px;background:#CCCEDB;"></div><svg style="left:0;top:0" width="1281" height="763" viewBox="0 0 1281 763"><rect x="919" y="441" width="19" height="1.8" fill="#355873"/><rect x="919" y="445.2" width="8" height="1.8" fill="#9DBBAA"/><rect x="919" y="448" width="8" height="1" fill="#3AA776"/><rect x="919" y="450.2" width="8" height="1.8" fill="#9DBBAA"/><rect x="919" y="454.2" width="8" height="1.8" fill="#8FB5CC"/><rect x="919" y="457" width="8" height="1" fill="#1E9BE0"/><rect x="930" y="445.2" width="8" height="1.8" fill="#9DBBAA"/><rect x="930" y="448" width="8" height="1" fill="#3AA776"/><rect x="930" y="450.2" width="8" height="1.8" fill="#9DBBAA"/><rect x="930" y="454.2" width="8" height="1.8" fill="#8FB5CC"/><rect x="930" y="457" width="8" height="1" fill="#1E9BE0"/></svg><div style="left:944px;top:439px;width:1px;height:24px;background:#CCCEDB;"></div><span class="t" style='left:951.90px;top:438.40px;font:bold 11.5px "Liberation Sans", sans-serif;line-height:12.00px;color:#3AA776;transform:scaleX(0.8750);'>A</span><span class="t" style='left:952.00px;top:448.80px;font:bold 11.5px "Liberation Sans", sans-serif;line-height:12.00px;color:#E0453A;transform:scaleX(0.9429);'>Z</span><svg style="left:0;top:0" width="1281" height="763" viewBox="0 0 1281 763"><rect x="964" y="441" width="1.8" height="1.8" fill="#355873"/><path d="M964.9 444v13.6M961.2 454.2L964.9 458.2L968.6 454.2" fill="none" stroke="#355873" stroke-width="1.7"/></svg><div style="left:976px;top:439px;width:1px;height:24px;background:#CCCEDB;"></div><div style="left:980px;top:439px;width:150px;height:22px;background:#EEEEF2;border:1px solid #C6C6C6;"></div><span class="t" style='left:983.50px;top:443.00px;font:12px "Liberation Sans", sans-serif;line-height:14.00px;color:#6D6D6D;transform:scaleX(0.9378);'>Label7</span><svg style="left:1118.6px;top:449px;" width="8" height="5" viewBox="0 0 8 5"><path d="M0 0H7.4L3.7 4Z" fill="#BDBDBD"/></svg><div class="pgrid" style="left:884px;top:465px;width:378px;height:215px;background:#EEEEF2;overflow:hidden;"><div style="left:1px;top:6px;width:9px;height:9px;background:#EEEEF2;border:1px solid #1E1E1E;"><div style="left:1px;top:3px;width:5px;height:1px;background:#000"></div><div style="left:3px;top:1px;width:1px;height:5px;background:#000"></div></div><div style="left:1px;top:25px;width:9px;height:9px;background:#EEEEF2;border:1px solid #1E1E1E;"><div style="left:1px;top:3px;width:5px;height:1px;background:#000"></div></div><div style="left:1px;top:196px;width:9px;height:9px;background:#EEEEF2;border:1px solid #1E1E1E;"><div style="left:1px;top:3px;width:5px;height:1px;background:#000"></div></div><div style="left:13px;top:39px;width:185px;height:18px;background:#F5F5F5;"></div><div style="left:199px;top:39px;width:180px;height:18px;background:#F5F5F5;"></div><span class="t" style='left:16.30px;top:41.00px;font:12px "Liberation Sans", sans-serif;line-height:14.00px;color:#1E1E1E;transform:scaleX(0.9803);'>Name</span><span class="t" style='left:202.30px;top:41.00px;font:12px "Liberation Sans", sans-serif;line-height:14.00px;color:#1E1E1E;transform:scaleX(0.9406);'>Label7</span><div style="left:13px;top:58px;width:185px;height:18px;background:#EEEEF2;"></div><div style="left:199px;top:58px;width:180px;height:18px;background:#F5F5F5;"></div><span class="t" style='left:16.30px;top:60.00px;font:12px "Liberation Sans", sans-serif;line-height:14.00px;color:#1E1E1E;transform:scaleX(1.0175);'>Caption</span><span class="t" style='left:202.30px;top:60.00px;font:12px "Liberation Sans", sans-serif;line-height:14.00px;color:#1E1E1E;transform:scaleX(0.9945);'>Body</span><div style="left:361px;top:58px;width:17px;height:18px;background:#F5F5F5;border:1px solid #D3D6E3;"></div><div style="left:365px;top:69px;width:2px;height:3px;background:#000;"></div><div style="left:369px;top:69px;width:2px;height:3px;background:#000;"></div><div style="left:373px;top:69px;width:2px;height:3px;background:#000;"></div><div style="left:13px;top:77px;width:185px;height:18px;background:#F5F5F5;"></div><div style="left:199px;top:77px;width:180px;height:18px;background:#F5F5F5;"></div><span class="t" style='left:16.30px;top:79.00px;font:12px "Liberation Sans", sans-serif;line-height:14.00px;color:#1E1E1E;transform:scaleX(0.9504);'>Visible</span><span class="t" style='left:202.30px;top:79.00px;font:12px "Liberation Sans", sans-serif;line-height:14.00px;color:#1E1E1E;transform:scaleX(0.9092);'>1-Yes</span><div style="left:13px;top:96px;width:185px;height:18px;background:#F5F5F5;"></div><div style="left:199px;top:96px;width:180px;height:18px;background:#F5F5F5;"></div><span class="t" style='left:16.30px;top:98.00px;font:12px "Liberation Sans", sans-serif;line-height:14.00px;color:#1E1E1E;transform:scaleX(0.9243);'>Back Style</span><span class="t" style='left:202.30px;top:98.00px;font:12px "Liberation Sans", sans-serif;line-height:14.00px;color:#1E1E1E;transform:scaleX(0.9618);'>0-Transparent</span><div style="left:13px;top:115px;width:185px;height:18px;background:#F5F5F5;"></div><div style="left:199px;top:115px;width:180px;height:18px;background:#F5F5F5;"></div><span class="t" style='left:16.30px;top:117.00px;font:12px "Liberation Sans", sans-serif;line-height:14.00px;color:#1E1E1E;transform:scaleX(0.9661);'>Back Color</span><div style="left:201px;top:117px;width:19px;height:14px;background:#fff;border:1px solid #000;"></div><span class="t" style='left:227.40px;top:117.00px;font:12px "Liberation Sans", sans-serif;line-height:14.00px;color:#1E1E1E;transform:scaleX(0.8861);'>16777215</span><div style="left:13px;top:134px;width:185px;height:18px;background:#F5F5F5;"></div><div style="left:199px;top:134px;width:180px;height:18px;background:#F5F5F5;"></div><span class="t" style='left:16.30px;top:136.00px;font:12px "Liberation Sans", sans-serif;line-height:14.00px;color:#1E1E1E;transform:scaleX(0.9401);'>Special Effect</span><span class="t" style='left:202.30px;top:136.00px;font:12px "Liberation Sans", sans-serif;line-height:14.00px;color:#1E1E1E;transform:scaleX(0.9413);'>0-Flat</span><div style="left:13px;top:153px;width:185px;height:18px;background:#F5F5F5;"></div><div style="left:199px;top:153px;width:180px;height:18px;background:#F5F5F5;"></div><span class="t" style='left:16.30px;top:155.00px;font:12px "Liberation Sans", sans-serif;line-height:14.00px;color:#1E1E1E;transform:scaleX(0.9649);'>Fore Color</span><div style="left:201px;top:155px;width:19px;height:14px;background:#000;"></div><span class="t" style='left:227.30px;top:155.00px;font:12px "Liberation Sans", sans-serif;line-height:14.00px;color:#1E1E1E;transform:scaleX(0.8143);'>0</span><div style="left:13px;top:172px;width:185px;height:18px;background:#F5F5F5;"></div><div style="left:199px;top:172px;width:180px;height:18px;background:#F5F5F5;"></div><span class="t" style='left:16.30px;top:174.00px;font:12px "Liberation Sans", sans-serif;line-height:14.00px;color:#1E1E1E;transform:scaleX(0.9951);'>Text Align</span><span class="t" style='left:202.30px;top:174.00px;font:12px "Liberation Sans", sans-serif;line-height:14.00px;color:#1E1E1E;transform:scaleX(0.9696);'>0-Left</span><div style="left:13px;top:210px;width:185px;height:18px;background:#F5F5F5;"></div><div style="left:199px;top:210px;width:180px;height:18px;background:#F5F5F5;"></div><span class="t" style='left:16.30px;top:212.00px;font:12px "Liberation Sans", sans-serif;line-height:14.00px;color:#1E1E1E;'>Left</span><span class="t" style='left:202.30px;top:212.00px;font:12px "Liberation Sans", sans-serif;line-height:14.00px;color:#1E1E1E;transform:scaleX(0.9168);'>0.5cm (283)</span><span class="t" style='left:16.00px;top:3.00px;font:bold 12px "Liberation Sans", sans-serif;line-height:14.00px;color:#1E1E1E;transform:scaleX(0.9854);'>Object</span><span class="t" style='left:16.00px;top:22.00px;font:bold 12px "Liberation Sans", sans-serif;line-height:14.00px;color:#1E1E1E;transform:scaleX(0.9834);'>Format</span><span class="t" style='left:16.00px;top:193.00px;font:bold 12px "Liberation Sans", sans-serif;line-height:14.00px;color:#1E1E1E;transform:scaleX(0.9505);'>Position &amp; Size</span></div><div style="left:1262px;top:466px;width:1px;height:214px;background:#FAFAFB;"></div><div style="left:1263px;top:466px;width:16px;height:214px;background:#F0F0F0;"></div><div style="left:1263px;top:483px;width:15px;height:79px;background:#CDCDCD;"></div><svg style="left:0;top:0" width="1281" height="763" viewBox="0 0 1281 763"><path d="M1267.3 477.6L1270.5 474L1273.7 477.6" fill="none" stroke="#484848" stroke-width="2"/><path d="M1267.3 670.4L1270.5 674L1273.7 670.4" fill="none" stroke="#484848" stroke-width="2"/></svg><div style="left:882px;top:681px;width:397px;height:4px;background:#F3F3F6;"></div><div style="left:883px;top:685px;width:396px;height:57px;background:#F5F5F5;"></div><span class="t" style='left:887.90px;top:688.00px;font:bold 12px "Liberation Sans", sans-serif;line-height:14.00px;color:#1E1E1E;transform:scaleX(0.9497);'>Caption</span></div>
</body></html>
